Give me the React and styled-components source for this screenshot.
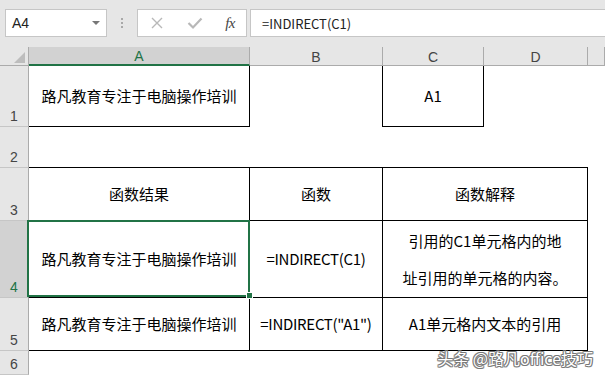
import styled, { createGlobalStyle } from "styled-components";

const GlobalStyle = createGlobalStyle`
  html, body {
    margin: 0;
    padding: 0;
    background: #ffffff;
  }
  body {
    font-family: "Noto Sans CJK SC", "Liberation Sans", sans-serif;
  }
`;

const Page = styled.div`
  position: relative;
  width: 605px;
  height: 375px;
  overflow: hidden;
  display: flex;
  flex-direction: column;
  background: #ffffff;
`;

const Toolbar = styled.div`
  flex: none;
  height: 47px;
  box-sizing: border-box;
  padding: 9px 0 0 5px;
  background: #e6e6e6;
  display: flex;
  align-items: flex-start;
`;

const NameBox = styled.div`
  width: 102px;
  height: 28px;
  box-sizing: border-box;
  border: 1px solid #c6c6c6;
  background: #ffffff;
  display: flex;
  align-items: center;
  justify-content: space-between;
  padding: 0 6px 0 6px;
  font-family: "Liberation Sans", sans-serif;
  font-size: 14px;
  color: #222222;
`;

const DropArrow = styled.span`
  width: 0;
  height: 0;
  border-left: 4px solid transparent;
  border-right: 4px solid transparent;
  border-top: 4px solid #777777;
`;

const Grip = styled.div`
  width: 30px;
  height: 28px;
  display: flex;
  flex-direction: column;
  align-items: center;
  justify-content: center;
  gap: 2px;

  span {
    width: 2px;
    height: 2px;
    background: #a8a8a8;
  }
`;

const ButtonBox = styled.div`
  width: 110px;
  height: 28px;
  box-sizing: border-box;
  border: 1px solid #c6c6c6;
  background: #ffffff;
  display: flex;
  align-items: center;
  justify-content: space-between;
  padding: 0 11px 0 12px;
`;

const Fx = styled.span`
  font-family: "Liberation Serif", serif;
  font-style: italic;
  font-size: 15px;
  color: #444444;
  letter-spacing: -0.5px;
`;

const FormulaInput = styled.div`
  flex: 1;
  height: 28px;
  margin-left: 3px;
  box-sizing: border-box;
  border: 1px solid #c6c6c6;
  border-right: none;
  background: #ffffff;
  display: flex;
  align-items: center;
  padding-left: 11px;
  font-size: 13px;
  color: #222222;
`;

const Sheet = styled.div`
  flex: 1;
  display: grid;
  grid-template-columns: 29px 221px 133px 101px 104px 1fr;
  grid-template-rows: 19px 61px 41px 53px 77px 53px 1fr;
`;

const Corner = styled.div`
  position: relative;
  box-sizing: border-box;
  background: #e6e6e6;
  border-right: 1px solid #ababab;
  border-bottom: 1px solid #ababab;

  &::after {
    content: "";
    position: absolute;
    right: 3px;
    bottom: 2px;
    width: 0;
    height: 0;
    border-left: 11px solid transparent;
    border-bottom: 11px solid #bdbdbd;
  }
`;

const ColHead = styled.div`
  box-sizing: border-box;
  background: ${(p) => (p.$selected ? "#d2d2d2" : "#e6e6e6")};
  border-right: 1px solid #ababab;
  border-bottom: ${(p) => (p.$selected ? "2px solid #217346" : "1px solid #ababab")};
  display: flex;
  align-items: flex-end;
  justify-content: center;
  font-family: "Liberation Sans", sans-serif;
  font-size: 14px;
  line-height: 16px;
  color: ${(p) => (p.$selected ? "#217346" : "#444444")};
`;

const RowHead = styled.div`
  box-sizing: border-box;
  background: ${(p) => (p.$selected ? "#d2d2d2" : "#e6e6e6")};
  border-right: 1px solid ${(p) => (p.$selected ? "#217346" : "#ababab")};
  border-bottom: 1px solid #c6c6c6;
  display: flex;
  align-items: flex-end;
  justify-content: center;
  padding-bottom: 2px;
  font-family: "Liberation Sans", sans-serif;
  font-size: 14px;
  line-height: 16px;
  color: ${(p) => (p.$selected ? "#217346" : "#444444")};
`;

const Cell = styled.div`
  position: relative;
  box-sizing: border-box;
  grid-column: ${(p) => (p.$span ? `span ${p.$span}` : "auto")};
  border-right: ${(p) => (p.$r ? "1px solid #000000" : "none")};
  border-bottom: ${(p) => (p.$b ? "1px solid #000000" : "none")};
  display: flex;
  flex-direction: column;
  align-items: center;
  justify-content: center;
  text-align: center;
  font-size: 15px;
  line-height: ${(p) => (p.$lh ? `${p.$lh}px` : "20px")};
  letter-spacing: ${(p) => (p.$latin ? "-0.3px" : "0")};
  color: #000000;
  white-space: nowrap;
`;

const Selection = styled.div`
  position: absolute;
  top: -1px;
  left: -2px;
  right: -1px;
  bottom: 0;
  border: 2px solid #217346;
  z-index: 2;
  pointer-events: none;

  &::after {
    content: "";
    position: absolute;
    right: -5px;
    bottom: -4px;
    width: 5px;
    height: 5px;
    background: #217346;
    border: 1px solid #ffffff;
  }
`;

const Watermark = styled.div`
  position: absolute;
  right: 12px;
  bottom: 8px;
  font-size: 16px;
  line-height: 18px;
  color: #ffffff;
  text-shadow: 1px 0 0 #777, -1px 0 0 #777, 0 1px 0 #777, 0 -1px 0 #777,
    1px 1px 0 #999, -1px -1px 0 #999, 1px -1px 0 #999, -1px 1px 0 #999;
  z-index: 3;
`;

const columns = ["A", "B", "C", "D", ""];
const RESULT_TEXT = "路凡教育专注于电脑操作培训";

export default function App() {
  return (
    <>
      <GlobalStyle />
      <Page>
        <Toolbar>
          <NameBox>
            A4
            <DropArrow />
          </NameBox>
          <Grip>
            <span />
            <span />
            <span />
          </Grip>
          <ButtonBox>
            <svg width="14" height="14" viewBox="0 0 14 14">
              <path d="M2 2 L12 12 M12 2 L2 12" stroke="#b8b8b8" strokeWidth="1.4" fill="none" />
            </svg>
            <svg width="16" height="14" viewBox="0 0 16 14">
              <path d="M1.5 7 L6 11.5 L14.5 2.5" stroke="#b8b8b8" strokeWidth="2.2" fill="none" />
            </svg>
            <Fx>fx</Fx>
          </ButtonBox>
          <FormulaInput>=INDIRECT(C1)</FormulaInput>
        </Toolbar>

        <Sheet>
          <Corner />
          {columns.map((c, i) => (
            <ColHead key={i} $selected={c === "A"}>
              {c}
            </ColHead>
          ))}

          <RowHead>1</RowHead>
          <Cell $r $b>{RESULT_TEXT}</Cell>
          <Cell $r />
          <Cell $r $b>A1</Cell>
          <Cell />
          <Cell />

          <RowHead>2</RowHead>
          <Cell $b />
          <Cell $b />
          <Cell $b />
          <Cell $b />
          <Cell />

          <RowHead>3</RowHead>
          <Cell $r $b>函数结果</Cell>
          <Cell $r $b>函数</Cell>
          <Cell $r $b $span={2}>函数解释</Cell>
          <Cell />

          <RowHead $selected>4</RowHead>
          <Cell $r $b>
            {RESULT_TEXT}
            <Selection />
          </Cell>
          <Cell $r $b $latin>=INDIRECT(C1)</Cell>
          <Cell $r $b $span={2} $lh={37}>
            <span>引用的C1单元格内的地</span>
            <span>址引用的单元格的内容。</span>
          </Cell>
          <Cell />

          <RowHead>5</RowHead>
          <Cell $r $b>{RESULT_TEXT}</Cell>
          <Cell $r $b $latin>=INDIRECT("A1")</Cell>
          <Cell $r $b $span={2}>A1单元格内文本的引用</Cell>
          <Cell />

          <RowHead>6</RowHead>
          <Cell />
          <Cell />
          <Cell />
          <Cell />
          <Cell />
        </Sheet>

        <Watermark>头条 @路凡office技巧</Watermark>
      </Page>
    </>
  );
}
